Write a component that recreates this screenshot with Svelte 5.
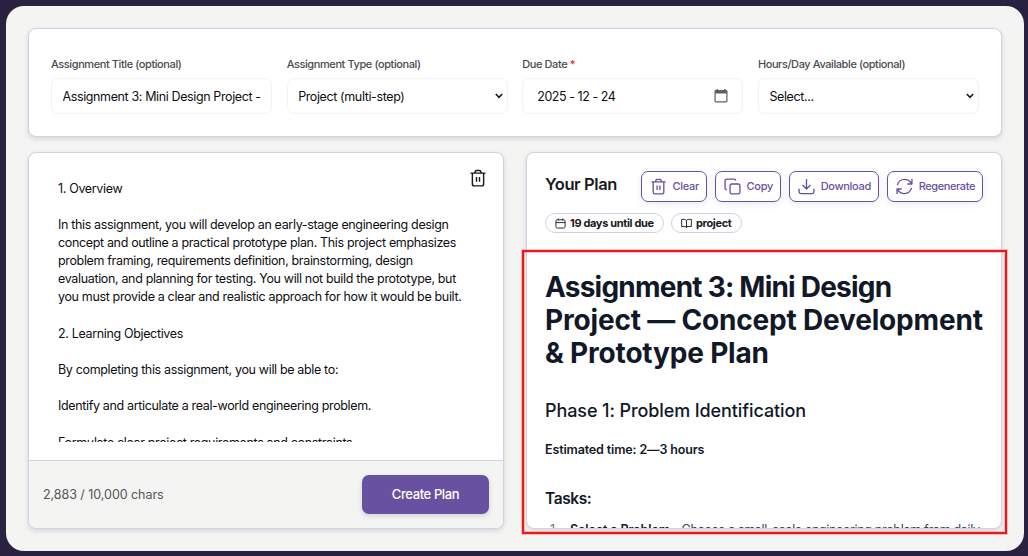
<script>
	let title = $state('Assignment 3: Mini Design Project -');
	let type = $state('project');
	let dueDate = $state('2025 - 12 - 24');
	let hours = $state('');

	const paragraphs = [
		['1. Overview'],
		[
			'In this assignment, you will develop an early-stage engineering design',
			'concept and outline a practical prototype plan. This project emphasizes',
			'problem framing, requirements definition, brainstorming, design',
			'evaluation, and planning for testing. You will not build the prototype, but',
			'you must provide a clear and realistic approach for how it would be built.'
		],
		['2. Learning Objectives'],
		['By completing this assignment, you will be able to:'],
		['Identify and articulate a real-world engineering problem.'],
		['Formulate clear project requirements and constraints.']
	];

	const actions = [
		{ id: 'clear', label: 'Clear' },
		{ id: 'copy', label: 'Copy' },
		{ id: 'download', label: 'Download' },
		{ id: 'regenerate', label: 'Regenerate' }
	];
</script>

{#snippet trash()}
	<path d="M2 5.500h20M7.500 5.500l1-2.500c.3-.7.8-1 1.500-1h4c.7 0 1.200.3 1.500 1l1 2.500M4.500 5.500v14.500c0 1.400 1 2.500 2.500 2.500h10c1.500 0 2.500-1.100 2.500-2.500V5.500M10 10.500v6.500M14 10.500v6.500" />
{/snippet}

{#snippet chevron()}
	<svg class="chevron" viewBox="0 0 8 6"><path d="M.8 1 4 4.4 7.2 1" /></svg>
{/snippet}

<main class="shell">
	<section class="card form">
		<label class="field">
			<span class="field__label">Assignment Title (optional)</span>
			<span class="control"><input bind:value={title} /></span>
		</label>
		<label class="field">
			<span class="field__label">Assignment Type (optional)</span>
			<span class="control">
				<select bind:value={type}><option value="project">Project (multi-step)</option></select>
				{@render chevron()}
			</span>
		</label>
		<label class="field">
			<span class="field__label">Due Date <em>*</em></span>
			<span class="control control--date">
				<input bind:value={dueDate} />
				<svg class="calendar" viewBox="0 0 14 14">
					<path d="M2.500 0h1.500v1h6V0h1.500v1h.6c.8 0 1.400.6 1.400 1.400v9.700c0 .8-.6 1.400-1.400 1.400H1.900c-.8 0-1.400-.6-1.400-1.400V2.400C.5 1.600 1.100 1 1.900 1h.6zM1.700 4.600v7.100c0 .4.200.6.6.6h9.400c.4 0 .6-.2.6-.6V4.600z" />
				</svg>
			</span>
		</label>
		<label class="field">
			<span class="field__label">Hours/Day Available (optional)</span>
			<span class="control">
				<select bind:value={hours}><option value="">Select...</option></select>
				{@render chevron()}
			</span>
		</label>
	</section>

	<div class="columns">
		<section class="card source">
			<div class="source__body">
				<div class="source__text">
					{#each paragraphs as lines}
						<p>{#each lines as line}<span>{line}</span>{/each}</p>
					{/each}
				</div>
				<svg class="icon source__trash" viewBox="0 0 24 24">{@render trash()}</svg>
			</div>
			<footer>
				<span class="count">2,883 / 10,000 chars</span>
				<button class="create">Create Plan</button>
			</footer>
		</section>

		<div class="plan-wrap">
			<section class="card plan">
				<header>
					<h2>Your Plan</h2>
					<div class="actions">
						{#each actions as action}
							<button class="action action--{action.id}">
								<svg class="icon" viewBox="0 0 24 24">
									{#if action.id === 'clear'}
										{@render trash()}
									{:else if action.id === 'copy'}
										<rect x="8.500" y="8.500" width="14" height="14" rx="2.500" />
										<path d="M4 16.500c-1.400 0-2.500-1-2.500-2.400V4c0-1.400 1.100-2.500 2.500-2.500h10.200c1.300 0 2.300 1.100 2.300 2.500" />
									{:else if action.id === 'download'}
										<path d="M12 1.500v14M6.500 10 12 15.500l5.500-5.500M1.500 15v4.500c0 1.400 1 2.500 2.500 2.500h16c1.500 0 2.500-1.100 2.500-2.500V15" />
									{:else}
										<path d="M22.500 1.500v7H16M1.500 22.500v-7H8M2 10C3 5.500 7.200 2 12 2c4.400 0 8 2.500 9.800 6M22 14c-1 4.500-5.200 8-10 8-4.400 0-8-2.500-9.800-6" />
									{/if}
								</svg>
								<span>{action.label}</span>
							</button>
						{/each}
					</div>
				</header>
				<div class="chips">
					<span class="chip chip--due">
						<svg class="icon" viewBox="0 0 12 12"><path d="M2.500 2h7c.8 0 1.500.6 1.500 1.400v6.200c0 .8-.7 1.400-1.500 1.400h-7C1.700 11 1 10.400 1 9.600V3.400C1 2.600 1.700 2 2.500 2zM1 5h10M3.500.5v2.200M8.500.5v2.200" /></svg>
						<span>19 days until due</span>
					</span>
					<span class="chip chip--type">
						<svg class="icon" viewBox="0 0 12 12"><path d="M6 3v7.500M6 3C5.700 2 4.900 1.500 4 1.500H.7v7.800h3.600c.9 0 1.400.4 1.700 1.200.3-.8.8-1.200 1.700-1.200h3.600V1.500H8c-.9 0-1.700.5-2 1.500z" /></svg>
						<span>project</span>
					</span>
				</div>
				<article>
					<h1>
						<span class="first">Assignment 3: Mini Design</span>
						<span>Project — Concept Development</span>
						<span>&amp; Prototype Plan</span>
					</h1>
					<h3>Phase 1: Problem Identification</h3>
					<p class="estimate">Estimated time: 2—3 hours</p>
					<h4>Tasks:</h4>
					<div class="task">
						<span class="task__number">1.</span>
						<span class="task__text"><strong>Select a Problem</strong> - Choose a small-scale engineering problem from daily</span>
					</div>
				</article>
			</section>
			<div class="highlight"></div>
		</div>
	</div>
</main>

<style>
	:global(body) {
		background: #292140;
		overflow: hidden;
	}
	.shell {
		background: #f4f4f2;
		border-radius: 18px;
		box-sizing: border-box;
		color: #19191c;
		display: flex;
		flex-direction: column;
		font-family: Inter, "Liberation Sans", sans-serif;
		gap: 15px;
		height: 545px;
		margin: 6px 4px 5px 6px;
		padding: 22px;
	}
	.card {
		background: #fff;
		border: 1px solid #d6cee5;
		border-radius: 8px;
		box-shadow: 0 2px 5px rgba(40, 30, 60, .14);
		box-sizing: border-box;
	}
	.form {
		display: grid;
		flex: none;
		gap: 14.500px;
		grid-template-columns: repeat(4, 1fr);
		height: 109px;
		padding: 27px 22px 0;
	}
	.field {
		display: flex;
		flex-direction: column;
		min-width: 0;
	}
	.field__label {
		color: #4b4b50;
		font-size: 11px;
		font-weight: 500;
		height: 22px;
		letter-spacing: -.41px;
		line-height: 16px;
		white-space: nowrap;
	}
	.field__label em {
		color: #e02020;
		font-style: normal;
	}
	.control {
		align-items: center;
		border: 1px solid #f3f2f4;
		border-radius: 7px;
		box-sizing: border-box;
		display: flex;
		height: 36px;
		padding: 0 4px 0 10.500px;
	}
	.control--date {
		padding: 0 14px;
	}
	input,
	select {
		appearance: none;
		background: none;
		border: 0;
		color: #0e0e11;
		flex: 1;
		font: 12.500px Inter, "Liberation Sans", sans-serif;
		letter-spacing: -.38px;
		min-width: 0;
		outline: 0;
		padding: 1px 0 0;
	}
	.control--date input {
		letter-spacing: -.46px;
	}
	.chevron {
		fill: none;
		height: 6px;
		stroke: #19191c;
		stroke-width: 1.600;
		width: 8px;
	}
	.calendar {
		fill: #606064;
		height: 14px;
		width: 14px;
	}
	.columns {
		display: grid;
		flex: none;
		gap: 22px;
		grid-template-columns: repeat(2, minmax(0, 1fr));
		grid-template-rows: 100%;
		height: 377px;
	}
	.source {
		display: flex;
		flex-direction: column;
		overflow: hidden;
	}
	.source__body {
		display: flex;
		flex: none;
		height: 307px;
		justify-content: space-between;
	}
	.source__text {
		height: 262.500px;
		margin: 26.500px 0 0 29px;
		overflow: hidden;
	}
	.source__text p {
		color: #0e0e11;
		font-size: 12.500px;
		letter-spacing: -.345px;
		line-height: 18.150px;
		margin: 0 0 18.150px;
		white-space: nowrap;
	}
	.source__text span,
	h1 span {
		display: block;
	}
	.icon {
		fill: none;
		flex: none;
		stroke: currentColor;
		stroke-linejoin: round;
		stroke-width: 1.900;
	}
	.source__trash {
		height: 18px;
		margin: 16px 16px 0 0;
		width: 18px;
	}
	footer {
		align-items: center;
		background: #f4f4f2;
		border-top: 1px solid #d6cee5;
		display: flex;
		flex: 1;
		justify-content: space-between;
		padding: 0 14px;
	}
	.count {
		color: #55555a;
		font-size: 12.500px;
		letter-spacing: -.05px;
	}
	button {
		cursor: pointer;
		font-family: inherit;
	}
	.create {
		background: #6951a1;
		border: 0;
		border-radius: 7px;
		box-shadow: 0 2px 5px rgba(40, 30, 60, .16);
		color: #fff;
		font-size: 13px;
		font-weight: 500;
		height: 39px;
		letter-spacing: -.4px;
		padding: 0 6px 1px;
		width: 127px;
	}
	.plan-wrap {
		position: relative;
	}
	.plan {
		height: 100%;
		overflow: hidden;
		padding: 18px 18px 0;
	}
	header {
		align-items: center;
		display: flex;
		height: 31px;
		justify-content: space-between;
	}
	h2 {
		font-size: 16.500px;
		font-weight: 600;
		letter-spacing: -.4px;
		margin: -6px 0 0;
		white-space: nowrap;
	}
	.actions {
		display: flex;
		gap: 8px;
	}
	.action {
		align-items: center;
		background: #fff;
		border: 1px solid #6951a1;
		border-radius: 7px;
		box-shadow: 0 2px 7px rgba(60, 40, 100, .1);
		box-sizing: border-box;
		color: #6951a1;
		display: flex;
		font-size: 11px;
		font-weight: 500;
		height: 31px;
		justify-content: space-between;
		letter-spacing: -.3px;
		padding: 0 7px 1px 8px;
		width: 66px;
	}
	.action--download {
		width: 90px;
	}
	.action--regenerate {
		letter-spacing: -.4px;
		width: 96px;
	}
	.action .icon {
		height: 17px;
		width: 17px;
	}
	.chips {
		display: flex;
		gap: 7px;
		margin-top: 11px;
	}
	.chip {
		align-items: center;
		border: 1px solid #d6cee5;
		border-radius: 10px;
		box-sizing: border-box;
		display: flex;
		font-size: 11px;
		font-weight: 700;
		gap: 4px;
		height: 20px;
		letter-spacing: -.35px;
		padding-left: 9px;
		white-space: nowrap;
		width: 119px;
	}
	.chip--type {
		width: 71px;
	}
	.chip .icon {
		height: 11px;
		stroke-width: 1;
		width: 11px;
	}
	article {
		color: #111827;
		margin-top: 37.500px;
		white-space: nowrap;
	}
	h1 {
		font-size: 28px;
		font-weight: 700;
		letter-spacing: -.18px;
		line-height: 33px;
		margin: 0;
	}
	h1 .first {
		letter-spacing: -.78px;
	}
	h3 {
		font-size: 18px;
		font-weight: 500;
		letter-spacing: -.1px;
		line-height: 24px;
		margin: 29px 0 0;
	}
	.estimate {
		font-size: 12.500px;
		font-weight: 600;
		letter-spacing: -.14px;
		line-height: 18px;
		margin: 18.500px 0 0;
	}
	h4 {
		font-size: 15.500px;
		font-weight: 600;
		letter-spacing: -.4px;
		line-height: 22px;
		margin: 28.500px 0 0;
	}
	.task {
		display: flex;
		font-size: 12.500px;
		letter-spacing: -.34px;
		line-height: 20px;
		margin-top: 10px;
		padding-left: 5px;
	}
	.task__number {
		color: #6b7280;
		width: 20px;
	}
	.task__text {
		color: #374151;
	}
	.task strong {
		color: #111827;
		font-weight: 600;
		letter-spacing: -.1px;
	}
	.highlight {
		border: 2px solid #e6191c;
		bottom: -5px;
		box-shadow: 0 0 0 1px rgba(230, 25, 28, .25), inset 0 0 0 1px rgba(230, 25, 28, .25);
		left: -4px;
		position: absolute;
		right: -5px;
		top: 98px;
	}
</style>
